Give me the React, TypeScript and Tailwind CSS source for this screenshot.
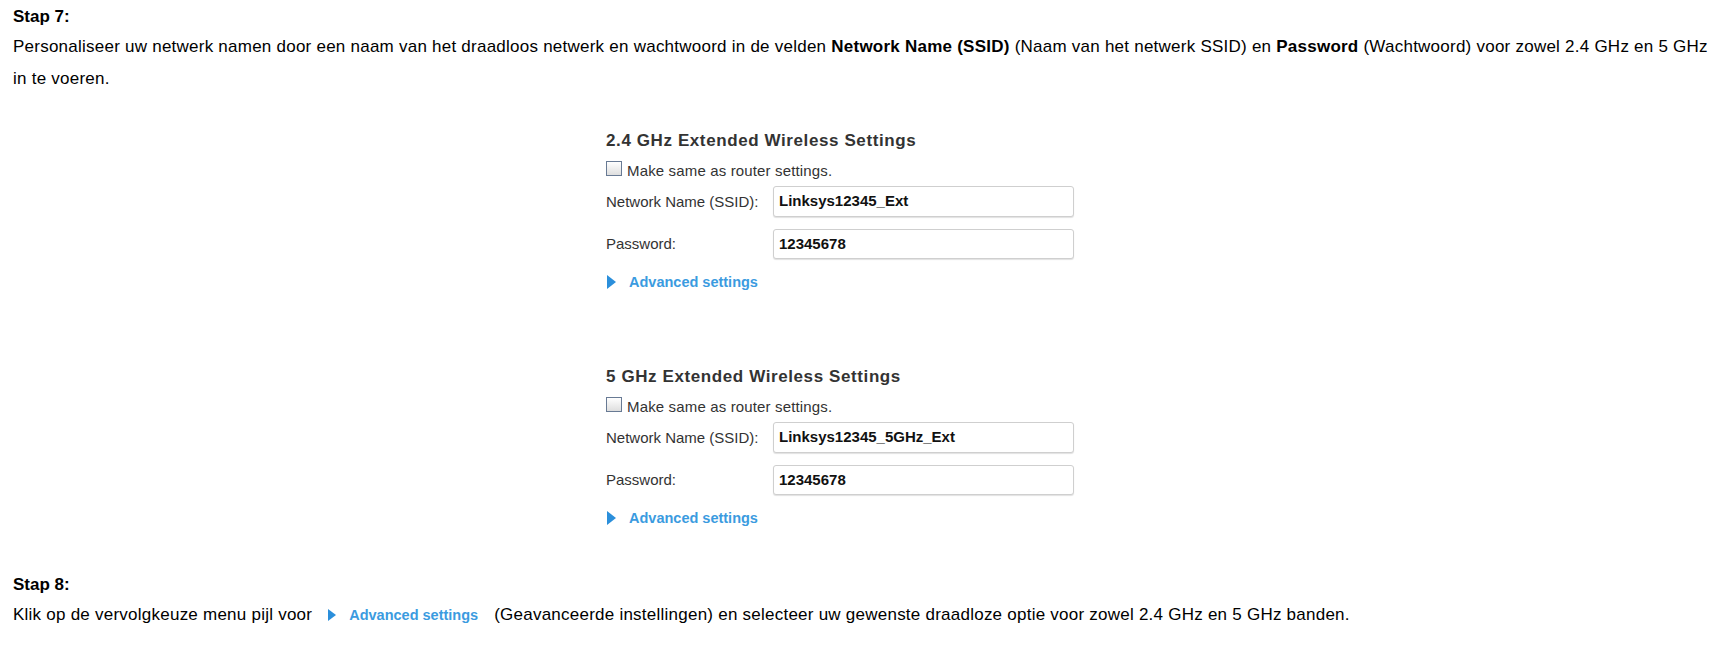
import React from "react";

const Tri = ({ h = 14, w = 9 }: { h?: number; w?: number }) => (
  <svg width={w} height={h} viewBox={`0 0 ${w} ${h}`} className="shrink-0">
    <polygon points={`0,0 ${w},${h / 2} 0,${h}`} fill="#2b8fdb" />
  </svg>
);

const Section = ({ title, ssid }: { title: string; ssid: string }) => (
  <div className="flex flex-col">
    <div className="text-[17px] leading-[20px] font-bold tracking-[0.6px] text-[#333]">{title}</div>
    <div className="mt-[10px] flex items-start">
      <div className="h-[15px] w-[16px] border border-[#687a94] bg-gradient-to-b from-white to-[#dedede]" />
      <span className="ml-[5px] mt-[2px] text-[15px] leading-[16px] tracking-[0.15px] text-[#333]">
        Make same as router settings.
      </span>
    </div>
    <div className="mt-[7px] flex items-center">
      <span className="w-[167px] text-[15px] leading-[16px] text-[#333]">Network Name (SSID):</span>
      <div className="flex h-[31px] w-[301px] items-center rounded-[3px] border border-[#cfcfcf] bg-white pl-[5px] shadow-[0_1px_1px_rgba(0,0,0,0.12)]">
        <span className="text-[15px] font-bold text-[#111]">{ssid}</span>
      </div>
    </div>
    <div className="mt-[12px] flex items-center">
      <span className="w-[167px] text-[15px] leading-[16px] text-[#333]">Password:</span>
      <div className="flex h-[30px] w-[301px] items-center rounded-[3px] border border-[#cfcfcf] bg-white pl-[5px] shadow-[0_1px_1px_rgba(0,0,0,0.12)]">
        <span className="text-[15px] font-bold text-[#111]">12345678</span>
      </div>
    </div>
    <div className="mt-[15px] flex items-start">
      <div className="mt-[1px] ml-[1px]">
        <Tri />
      </div>
      <span className="ml-[13px] text-[14.5px] leading-[16px] font-bold text-[#3b9be0]">Advanced settings</span>
    </div>
  </div>
);

export default function App() {
  return (
    <div
      className="min-h-[651px] bg-white px-[13px] pt-[3px] text-black"
      style={{ fontFamily: '"Liberation Sans", Arial, sans-serif' }}
    >
      <div className="text-[17px] leading-[28px] font-bold">Stap 7:</div>
      <p className="pr-[8px] text-[17px] leading-[32px] tracking-[0.24px]">
        Personaliseer uw netwerk namen door een naam van het draadloos netwerk en wachtwoord in de velden{" "}
        <b>Network Name (SSID)</b> (Naam van het netwerk SSID) en <b>Password</b> (Wachtwoord) voor zowel 2.4 GHz en 5 GHz
        in te voeren.
      </p>
      <div className="flex justify-center">
        <div className="w-[524px] pt-[36px]">
          <Section title="2.4 GHz Extended Wireless Settings" ssid="Linksys12345_Ext" />
          <div className="h-[77px]" />
          <Section title="5 GHz Extended Wireless Settings" ssid="Linksys12345_5GHz_Ext" />
        </div>
      </div>
      <div className="mt-[45px] text-[17px] leading-[28px] font-bold">Stap 8:</div>
      <div className="flex items-center text-[17px] leading-[32px] tracking-[0.24px]">
        <span>Klik op de vervolgkeuze menu pijl voor</span>
        <span className="ml-[16px] flex items-center tracking-normal">
          <Tri h={12} w={8} />
          <span className="ml-[13px] text-[14.5px] font-bold text-[#3b9be0]">Advanced settings</span>
        </span>
        <span className="ml-[16px]">
          (Geavanceerde instellingen) en selecteer uw gewenste draadloze optie voor zowel 2.4 GHz en 5 GHz banden.
        </span>
      </div>
    </div>
  );
}
